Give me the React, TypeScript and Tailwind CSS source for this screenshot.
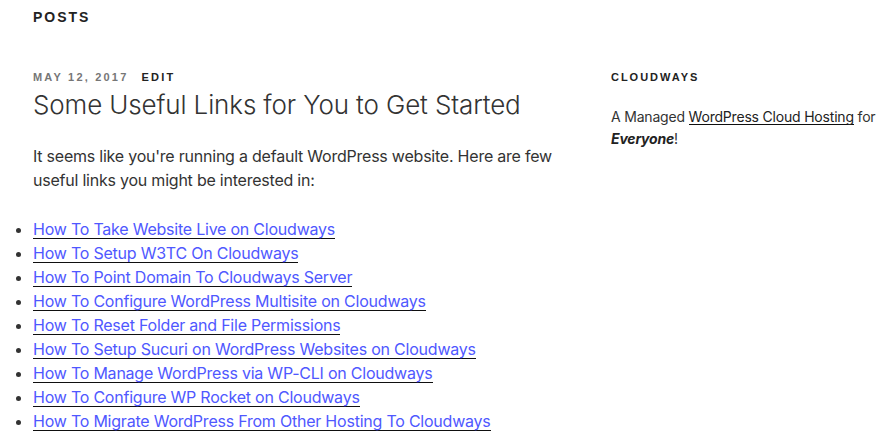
const links = [
  "How To Take Website Live on Cloudways",
  "How To Setup W3TC On Cloudways",
  "How To Point Domain To Cloudways Server",
  "How To Configure WordPress Multisite on Cloudways",
  "How To Reset Folder and File Permissions",
  "How To Setup Sucuri on WordPress Websites on Cloudways",
  "How To Manage WordPress via WP-CLI on Cloudways",
  "How To Configure WP Rocket on Cloudways",
  "How To Migrate WordPress From Other Hosting To Cloudways",
];

const label = "font-['Liberation_Sans',Arial,sans-serif] font-extrabold uppercase";

export default function App() {
  return (
    <div className="h-[439px] w-[889px] overflow-hidden bg-white pl-[33px] font-['Inter',sans-serif] text-[#333]">
      <header className="pt-[9px]">
        <h2 className={`${label} text-[14px] leading-[16px] tracking-[0.14em] text-[#222]`}>Posts</h2>
      </header>

      <div className="mt-[45px] flex gap-[53px]">
        <main className="w-[525px] shrink-0">
          <div className={`${label} flex gap-[13px] text-[11px] leading-[14px] tracking-[0.2em]`}>
            <span className="text-[#767676]">May 12, 2017</span>
            <span className="text-[#222]">Edit</span>
          </div>
          <h1 className="mt-[4px] text-[26px] font-light leading-[34px] tracking-[-0.005em] text-[#333]">
            Some Useful Links for You to Get Started
          </h1>

          <p className="mt-[22px] text-[16px] leading-[24px] tracking-[-0.014em]">
            It seems like you're running a default WordPress website. Here are few useful links you might be interested in:
          </p>

          <ul className="mt-[25px] list-outside list-disc pl-0 text-[16px] leading-[24px] tracking-[-0.014em] marker:text-[#333]">
            {links.map((l) => (
              <li key={l}>
                <a href="#" className="text-[#4f58ff] shadow-[inset_0_-1px_0_#0f0f0f]">
                  {l}
                </a>
              </li>
            ))}
          </ul>
        </main>

        <aside className="w-[278px] shrink-0">
          <h2 className={`${label} text-[11px] leading-[14px] tracking-[0.18em] text-[#222]`}>Cloudways</h2>
          <p className="mt-[22px] text-[14px] leading-[22px] tracking-[-0.014em] text-[#333]">
            A Managed{" "}
            <a href="#" className="text-[#222] shadow-[inset_0_-1px_0_#0f0f0f]">
              WordPress Cloud Hosting
            </a>{" "}
            for <em className="font-bold text-[#222]">Everyone</em>!
          </p>
        </aside>
      </div>
    </div>
  );
}
